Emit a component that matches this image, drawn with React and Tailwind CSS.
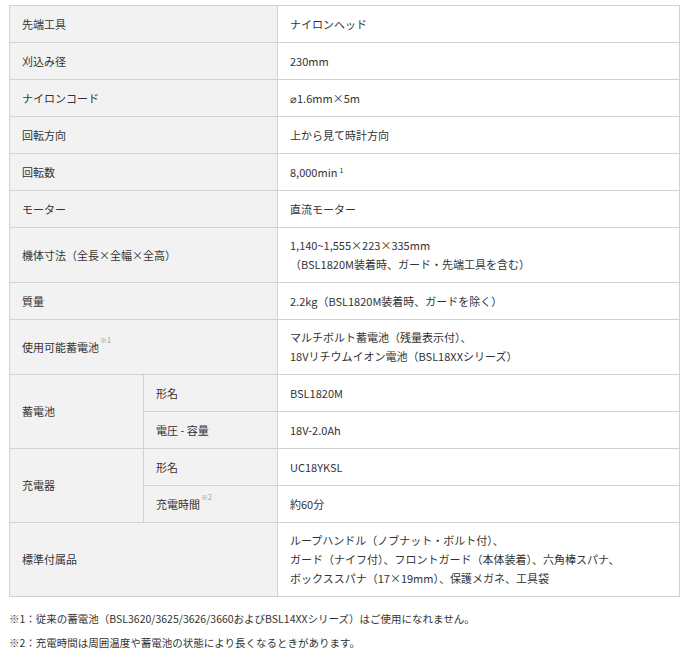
import React from "react";

const font = { fontFamily: '"Noto Sans CJK JP", "Noto Sans", sans-serif' };

const th = "border border-[#d2d2d2] bg-[#f2f2f2] px-[12px] py-[8px] text-left font-normal align-middle";
const td = "border border-[#d2d2d2] bg-white px-[12px] py-[8px] text-left align-middle";

function Row({ label, children, single = true }) {
  return (
    <tr className={single ? "h-[37px]" : ""}>
      <th colSpan={2} className={th}>{label}</th>
      <td className={td}>{children}</td>
    </tr>
  );
}

function Note({ children }) {
  return <sup className="text-[7px] text-[#999] align-super leading-none ml-[1px]">{children}</sup>;
}

export default function App() {
  return (
    <div className="bg-white w-[688px] h-[657px] pt-[5px] px-[9px] text-[11px] leading-[19px] text-[#333]" style={font}>
      <table className="w-[670px] border-collapse table-fixed">
        <colgroup>
          <col className="w-[134px]" />
          <col className="w-[134px]" />
          <col className="w-[402px]" />
        </colgroup>
        <tbody>
          <Row label="先端工具">ナイロンヘッド</Row>
          <Row label="刈込み径">230mm</Row>
          <Row label="ナイロンコード">⌀1.6mm×5m</Row>
          <Row label="回転方向">上から見て時計方向</Row>
          <Row label="回転数">
            8,000min<sup className="text-[7px] leading-none ml-[2px]">1</sup>
          </Row>
          <Row label="モーター">直流モーター</Row>
          <Row label="機体寸法（全長×全幅×全高）" single={false}>
            1,140~1,555×223×335mm<br />（BSL1820M装着時、ガード・先端工具を含む）
          </Row>
          <Row label="質量">2.2kg（BSL1820M装着時、ガードを除く）</Row>
          <Row label={<>使用可能蓄電池<Note>※1</Note></>} single={false}>
            マルチボルト蓄電池（残量表示付）、<br />18Vリチウムイオン電池（BSL18XXシリーズ）
          </Row>
          <tr className="h-[37px]">
            <th rowSpan={2} className={th}>蓄電池</th>
            <th className={th}>形名</th>
            <td className={td}>BSL1820M</td>
          </tr>
          <tr className="h-[37px]">
            <th className={th}>電圧 - 容量</th>
            <td className={td}>18V-2.0Ah</td>
          </tr>
          <tr className="h-[37px]">
            <th rowSpan={2} className={th}>充電器</th>
            <th className={th}>形名</th>
            <td className={td}>UC18YKSL</td>
          </tr>
          <tr className="h-[37px]">
            <th className={th}>充電時間<Note>※2</Note></th>
            <td className={td}>約60分</td>
          </tr>
          <Row label="標準付属品" single={false}>
            ループハンドル（ノブナット・ボルト付）、<br />
            ガード（ナイフ付）、フロントガード（本体装着）、六角棒スパナ、<br />
            ボックススパナ（17×19mm）、保護メガネ、工具袋
          </Row>
        </tbody>
      </table>
      <div className="mt-[12px] flex flex-col gap-[5px] text-[10.5px]">
        <p>※1：従来の蓄電池（BSL3620/3625/3626/3660およびBSL14XXシリーズ）はご使用になれません。</p>
        <p>※2：充電時間は周囲温度や蓄電池の状態により長くなるときがあります。</p>
      </div>
    </div>
  );
}
